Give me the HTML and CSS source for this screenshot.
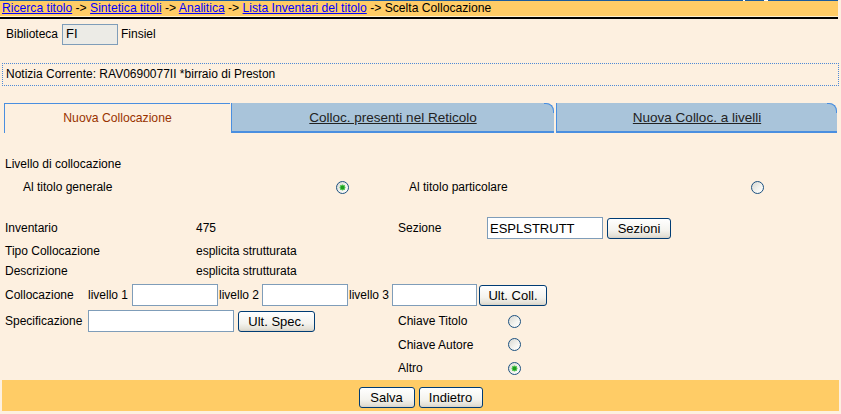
FILE: index.html
```html
<!DOCTYPE html>
<html lang="it">
<head>
<meta charset="utf-8">
<title>Scelta Collocazione</title>
<link rel="stylesheet" href="styles.css">
</head>
<body>
<div class="page">
  <div class="topline"></div>
  <div class="crumbs"><a href="#">Ricerca titolo</a> -&gt; <a href="#">Sintetica titoli</a> -&gt; <a href="#">Analitica</a> -&gt; <a href="#">Lista Inventari del titolo</a> -&gt; Scelta Collocazione</div>
  <div class="crumb-rule"></div>

  <div class="bib">
    <span>Biblioteca</span>
    <input class="bib-code" type="text" value="FI" readonly>
    <span class="bib-name">Finsiel</span>
  </div>

  <div class="notizia">Notizia Corrente: RAV0690077II *birraio di Preston</div>

  <div class="tabs">
    <div class="tab tab-active">Nuova Collocazione</div>
    <div class="tab tab-off tab-mid"><a href="#">Colloc. presenti nel Reticolo</a></div>
    <div class="tab tab-off tab-last"><a href="#">Nuova Colloc. a livelli</a></div>
  </div>

  <div class="form">
    <div class="row row-head">Livello di collocazione</div>
    <div class="row row-level">
      <span class="lv-gen">Al titolo generale</span>
      <input class="radio" type="radio" name="livello" checked>
      <span class="lv-part">Al titolo particolare</span>
      <input class="radio" type="radio" name="livello">
    </div>

    <div class="row row-inv">
      <span class="c1">Inventario</span>
      <span class="c2">475</span>
      <span class="c3">Sezione</span>
      <input class="txt txt-sez" type="text" value="ESPLSTRUTT">
      <button class="btn btn-sez" type="button">Sezioni</button>
    </div>
    <div class="row row-tipo">
      <span class="c1">Tipo Collocazione</span>
      <span class="c2">esplicita strutturata</span>
    </div>
    <div class="row row-descr">
      <span class="c1">Descrizione</span>
      <span class="c2">esplicita strutturata</span>
    </div>

    <div class="row row-coll">
      <span class="c-lab">Collocazione</span>
      <span class="c-liv">livello 1</span>
      <input class="txt txt-liv" type="text">
      <span class="c-liv c-liv-n">livello 2</span>
      <input class="txt txt-liv" type="text">
      <span class="c-liv c-liv-n">livello 3</span>
      <input class="txt txt-liv3" type="text">
      <button class="btn btn-coll" type="button">Ult. Coll.</button>
    </div>

    <div class="row row-spec">
      <span class="c-lab">Specificazione</span>
      <input class="txt txt-spec" type="text">
      <button class="btn btn-spec" type="button">Ult. Spec.</button>
      <span class="key-lab key-after">Chiave Titolo</span>
      <input class="radio" type="radio" name="chiave">
    </div>
    <div class="row row-aut">
      <span class="key-lab key-indent">Chiave Autore</span>
      <input class="radio" type="radio" name="chiave">
    </div>
    <div class="row row-altro">
      <span class="key-lab key-indent">Altro</span>
      <input class="radio" type="radio" name="chiave" checked>
    </div>
  </div>

  <div class="footer">
    <button class="btn btn-salva" type="button">Salva</button>
    <button class="btn btn-ind" type="button">Indietro</button>
  </div>
</div>
</body>
</html>
```

FILE: styles.css
```css
* { box-sizing: border-box; }

html, body {
  margin: 0;
  background: #fdf0e0;
}

body {
  font-family: "Liberation Sans", Arial, sans-serif;
  font-size: 12px;
  color: #000;
}

.page { width: 841px; }

.topline {
  width: 838px;
  height: 1px;
  background: linear-gradient(to right,
    #1a5c9e 0 743px, #ffffff 743px 745px,
    #1a5c9e 745px 764px, #ffffff 764px 768px,
    #1a5c9e 768px);
}

.crumbs {
  width: 838px;
  height: 15px;
  line-height: 15px;
  padding-left: 2px;
  background: #ffcc66;
  font-size: 12.15px;
  white-space: nowrap;
}

.crumbs a { color: #0000ff; text-decoration: underline; }

.crumb-rule {
  width: 838px;
  height: 3px;
  border-top: 1px solid #fff2d0;
  background: #000;
}

/* Biblioteca */
.bib {
  display: flex;
  align-items: center;
  height: 22px;
  margin-top: 4px;
  padding-left: 6px;
}

.bib-code {
  width: 56px;
  height: 21px;
  margin: 0 3px 0 4px;
  padding: 0 0 2px 3px;
  border: 1px solid #7f9db9;
  background: #ecebe6;
  font-family: "Liberation Sans", Arial, sans-serif;
  font-size: 13px;
  color: #000;
}

/* Notizia */
.notizia {
  width: 837px;
  height: 23px;
  margin: 18px 0 0 2px;
  padding-left: 3px;
  line-height: 21px;
  border: 1px dotted #4f8ad6;
}

/* Tabs */
.tabs {
  display: flex;
  height: 30px;
  margin: 17px 0 0 4px;
}

.tab {
  display: flex;
  align-items: center;
  justify-content: center;
  height: 30px;
}

.tab a {
  color: #222;
  font-size: 13.5px;
  text-decoration: underline;
}

.tab-active {
  width: 226px;
  padding-bottom: 2px;
  border-top: 1px solid #4a8fe0;
  border-left: 1px solid #4a8fe0;
  color: #993300;
  font-size: 12.2px;
}

.tab-off {
  position: relative;
  background: #a9c4da;
  border-left: 1px solid #4a8fe0;
  border-bottom: 2px solid #4a8fe0;
  border-top-right-radius: 8px;
}

.tab-off::after {
  content: "";
  position: absolute;
  top: 0;
  right: 0;
  width: 9px;
  height: 9px;
  border-top: 1px solid #4a8fe0;
  border-right: 1px solid #4a8fe0;
  border-top-right-radius: 8px;
}

.tab-mid { width: 323px; margin-left: 1px; }
.tab-last { width: 281px; margin-left: 2px; }

/* Form */
.form {
  margin-top: 22px;
  padding-left: 5px;
}

.row {
  display: flex;
  align-items: center;
  white-space: nowrap;
}

.row-head { height: 18px; }
.row-level { height: 28px; }
.row-inv { height: 24px; margin-top: 15px; }
.row-tipo { height: 22px; }
.row-descr { height: 18px; }
.row-coll { height: 24px; margin-top: 3px; }
.row-spec { height: 24px; margin-top: 2px; }
.row-aut { height: 23px; }
.row-altro { height: 24px; }

.lv-gen { width: 313px; margin-left: 18px; }
.lv-part { width: 342px; margin-left: 60px; }

.c1 { width: 191px; }
.c2 { width: 202px; }
.c3 { width: 89px; }

.c-lab { width: 83px; }
.c-liv { width: 44px; }
.c-liv-n { padding-left: 1px; }

.key-lab { width: 110px; }
.key-after { margin-left: 83px; }
.key-indent { margin-left: 393px; }

.txt {
  height: 22px;
  margin: 0;
  padding: 0 2px;
  border: 1px solid #7f9db9;
  background: #fff;
  font-family: "Liberation Sans", Arial, sans-serif;
  font-size: 13px;
  color: #000;
}

.txt-sez { width: 116px; }
.txt-liv { width: 86px; }
.txt-liv3 { width: 85px; }
.txt-spec { width: 146px; }

.btn {
  height: 21px;
  margin: 0;
  padding: 0;
  border: 1px solid #003c74;
  border-radius: 3px;
  background: linear-gradient(#ffffff, #f4f3ee 60%, #e3e0d6 90%, #d6d0c5);
  font-family: "Liberation Sans", Arial, sans-serif;
  font-size: 13px;
  color: #000;
}

.btn-sez { width: 64px; margin-left: 4px; }
.btn-coll { width: 68px; margin-left: 2px; }
.btn-spec { width: 77px; margin-left: 4px; }
.btn-salva { width: 56px; }
.btn-ind { width: 64px; }

.radio {
  appearance: none;
  -webkit-appearance: none;
  width: 13px;
  height: 13px;
  margin: 0;
  border: 1px solid #1c5180;
  border-radius: 50%;
  background: linear-gradient(135deg, #d8d8d2, #f4f4f0 60%, #ffffff);
}

.radio:checked {
  background:
    radial-gradient(circle, #1f9e1f 0 1.6px, #5cc85c 2.2px 2.8px, rgba(255,255,255,0) 3.2px),
    linear-gradient(135deg, #d8d8d2, #f4f4f0 60%, #ffffff);
}

/* Footer */
.footer {
  display: flex;
  align-items: center;
  justify-content: center;
  gap: 4px;
  width: 837px;
  height: 31px;
  margin-left: 2px;
  padding-top: 3px;
  background: #ffcc66;
}
```
